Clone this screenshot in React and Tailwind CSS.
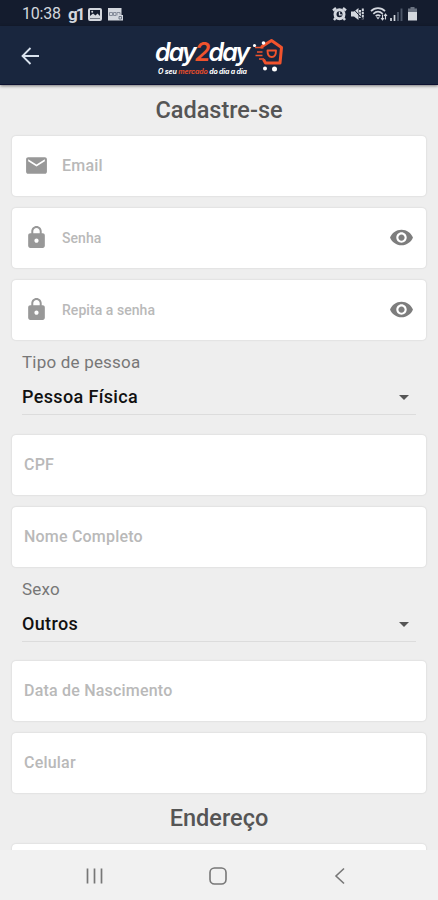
import { MdArrowDropDown, MdEmail, MdLock, MdVisibility } from "react-icons/md";

function StatusBar() {
  return (
    <div className="flex h-[26px] items-center justify-between bg-[#141c2e] pt-[2px] pr-[20px] pl-[22px] text-[#d3d7de]">
      <div className="flex items-center">
        <span className="w-[46px] text-[16px] leading-[24px] tracking-[-0.2px]">10:38</span>
        <span className="w-[20px] text-[17px] leading-[22px] font-bold tracking-[-2px]">g1</span>
        <svg className="mr-[5px]" width="14" height="13" viewBox="0 0 14 13">
          <rect x="1" y="1" width="12" height="11" rx="1" fill="none" stroke="currentColor" strokeWidth="2" />
          <path d="M2 10.5V8l3-2.5 2.5 2L9.500 5.500 12 8v2.500z" fill="currentColor" />
          <circle cx="4.200" cy="3.800" r="1" fill="currentColor" />
        </svg>
        <svg width="17" height="13" viewBox="0 0 17 13">
          <path d="M1 0h13.500v7H16v5.500H1z" fill="currentColor" />
          <path d="M2.500 4.500h3v3h-3zM6.500 7.500v-3h2.500v3zM10 7.500v-3h3v2" fill="none" stroke="#7d8593" strokeWidth="0.900" />
          <path d="M12 8.500h2.500v2.500H12z" fill="none" stroke="#596273" strokeWidth="0.800" />
        </svg>
      </div>
      <div className="flex items-center">
        <svg className="mr-[4px]" width="15" height="14" viewBox="0 0 15 14">
          <path d="M1 3.500 4 1M14 3.500 11 1M3.500 11 2 13M11.500 11 13 13" stroke="currentColor" strokeWidth="2.400" />
          <circle cx="7.500" cy="7.300" r="4.500" fill="none" stroke="currentColor" strokeWidth="3" />
          <path d="M7.500 4.800v3h2.300" fill="none" stroke="currentColor" strokeWidth="1.300" />
        </svg>
        <svg className="mr-[5px]" width="14" height="14" viewBox="0 0 14 14">
          <path d="M0 4.500h3L7.500 1v12L3 9.500H0z" fill="currentColor" />
          <path d="M9 3v8M11.800 1.500v11" stroke="currentColor" strokeWidth="2" strokeDasharray="2.500 0.800" />
          <path d="M1.500 1 12.500 13" stroke="#141c2e" strokeWidth="1" />
        </svg>
        <svg className="mr-[2px]" width="18" height="14" viewBox="0 0 18 14">
          <path d="M1 4.200C5 0.200 11 0.200 15 4.200M3.300 6.800c3-2.800 6.400-2.800 9.400 0M5.700 9.200c1.500-1.300 3.100-1.300 4.600 0" fill="none" stroke="currentColor" strokeWidth="1.700" />
          <path d="M6.200 10.200h3.600L8 12.500z" fill="currentColor" />
          <path d="M12.500 7.500v5M11 11l1.500 1.800L14 11M15.500 12.500v-5M14 9l1.500-1.800L17 9" fill="none" stroke="currentColor" strokeWidth="1.100" />
        </svg>
        <svg className="mr-[4px]" width="13" height="13" viewBox="0 0 13 13">
          <path d="M1 10v3M4.500 7v6" stroke="currentColor" strokeWidth="1.700" />
          <path d="M8 4v9M11.500 0.500v12.500" stroke="#4b5567" strokeWidth="1.900" />
        </svg>
        <svg width="11" height="14" viewBox="0 0 11 14">
          <path d="M3.500 0h4v1.500H10V6H1V1.500h2.500z" fill="#6a7281" />
          <path d="M1 5h9v8.500H1z" fill="currentColor" />
        </svg>
      </div>
    </div>
  );
}

function Logo() {
  return (
    <div className="flex h-full items-start pl-[2px]">
      <div className="w-[95px] shrink-0 pt-[11px] font-['Inter',sans-serif] whitespace-nowrap text-white italic">
        <div className="text-[25px] leading-[31px] font-semibold tracking-[-1.9px]">
          day<span className="text-[#f0532d]">2</span>day
        </div>
        <div className="pl-[3px] text-[7px] leading-[7px] font-bold tracking-[-0.15px]">
          O seu <span className="text-[#e04b2c]">mercado</span> do dia a dia
        </div>
      </div>
      <svg className="mt-[11px] ml-[2px] shrink-0" width="34" height="36" viewBox="0 0 34 36">
        <g fill="none" stroke="#f0532d" strokeLinejoin="round">
          <path d="M10 11.500V9.500L19.500 3.500 29.500 10.500 28 26H13.500L11.500 22.500" strokeWidth="3" />
          <path d="M3 10.500h7.500M5 15h5.500M3.500 18.500h7M7 22h5" strokeWidth="1.600" />
          <path d="M15.500 13.500h8.500c0 4.500-1.500 6.500-4.200 6.500s-4.300-2-4.300-6.500z" strokeWidth="1.900" />
        </g>
        <g fill="#fff">
          <circle cx="2.500" cy="8.500" r="1.600" />
          <circle cx="11.500" cy="6" r="1.800" />
          <circle cx="13" cy="31.500" r="2" />
          <circle cx="22.500" cy="32" r="2.500" />
        </g>
      </svg>
    </div>
  );
}

function Header() {
  return (
    <header className="relative z-10 grid h-[59px] shrink-0 grid-cols-[1fr_132px_1fr] items-center border-b border-[#0c1130] bg-[#19263e] shadow-[0_1px_3px_rgba(0,0,0,0.5)]">
      <svg className="mt-[2px] ml-[20px]" width="20" height="20" viewBox="0 0 20 20" fill="none" stroke="#d9e2ee" strokeWidth="1.800">
        <path d="M19 10H3M10.500 2 2.500 10l8 8" />
      </svg>
      <Logo />
    </header>
  );
}

function Field({ label, icon: Icon, password }) {
  return (
    <div className="flex h-[60px] items-center rounded-[4px] bg-white px-[12px] shadow-[0_0_2px_rgba(0,0,0,0.16)]">
      {Icon && <Icon size={25} className="mr-[13px] mb-px shrink-0 text-[#989898]" />}
      <span className={password ? "flex-1 text-[14px] font-medium tracking-[0.05px] text-[#b9b9b9]" : "flex-1 text-[16px] font-medium tracking-[0.2px] text-[#b9b9b9]"}>
        {label}
      </span>
      {password && <MdVisibility size={25} className="mb-px shrink-0 text-[#7d7d7d]" />}
    </div>
  );
}

function Select({ label, value }) {
  return (
    <div className="h-[94.5px] px-[10px] pt-[10px]">
      <div className="text-[17px] leading-[24px] tracking-[0.2px] text-[#777]">{label}</div>
      <div className="mt-[6px] flex h-[35px] items-center justify-between border-b border-[#dcdcdc]">
        <span className="text-[18px] leading-[24px] font-medium tracking-[0.35px] text-[#111]">{value}</span>
        <MdArrowDropDown size={24} className="text-[#555]" />
      </div>
    </div>
  );
}

function NavBar() {
  return (
    <nav className="relative flex h-[50px] shrink-0 items-center justify-between bg-[#f1f1f1] pr-[87px] pl-[84px] pt-px text-[#777]">
      <svg width="22" height="20" viewBox="0 0 22 20" stroke="currentColor" strokeWidth="1.700">
        <path d="M3.500 2.500v15M10.500 2.500v15M17.500 2.500v15" />
      </svg>
      <svg width="20" height="20" viewBox="0 0 20 20" fill="none" stroke="currentColor" strokeWidth="1.600">
        <rect x="2" y="2" width="16" height="16" rx="4.500" />
      </svg>
      <svg width="22" height="20" viewBox="0 0 22 20" fill="none" stroke="currentColor" strokeWidth="1.600">
        <path d="M15 2.500 7 10l8 7.500" />
      </svg>
    </nav>
  );
}

export default function App() {
  return (
    <div className="flex h-[900px] w-[438px] flex-col overflow-hidden bg-[#eee] font-['Roboto',sans-serif]">
      <StatusBar />
      <Header />
      <main className="min-h-0 flex-1 overflow-hidden px-[12px]">
        <h1 className="flex h-[51px] items-center justify-center text-[23.5px] font-medium text-[#555]">Cadastre-se</h1>
        <div className="flex flex-col gap-[12px]">
          <Field label="Email" icon={MdEmail} />
          <Field label="Senha" icon={MdLock} password />
          <Field label="Repita a senha" icon={MdLock} password />
        </div>
        <Select label="Tipo de pessoa" value="Pessoa Física" />
        <div className="flex flex-col gap-[12px]">
          <Field label="CPF" />
          <Field label="Nome Completo" />
        </div>
        <Select label="Sexo" value="Outros" />
        <div className="flex flex-col gap-[12px]">
          <Field label="Data de Nascimento" />
          <Field label="Celular" />
        </div>
        <h2 className="flex h-[51px] items-center justify-center text-[23.5px] font-medium text-[#555]">Endereço</h2>
        <Field />
      </main>
      <NavBar />
    </div>
  );
}
